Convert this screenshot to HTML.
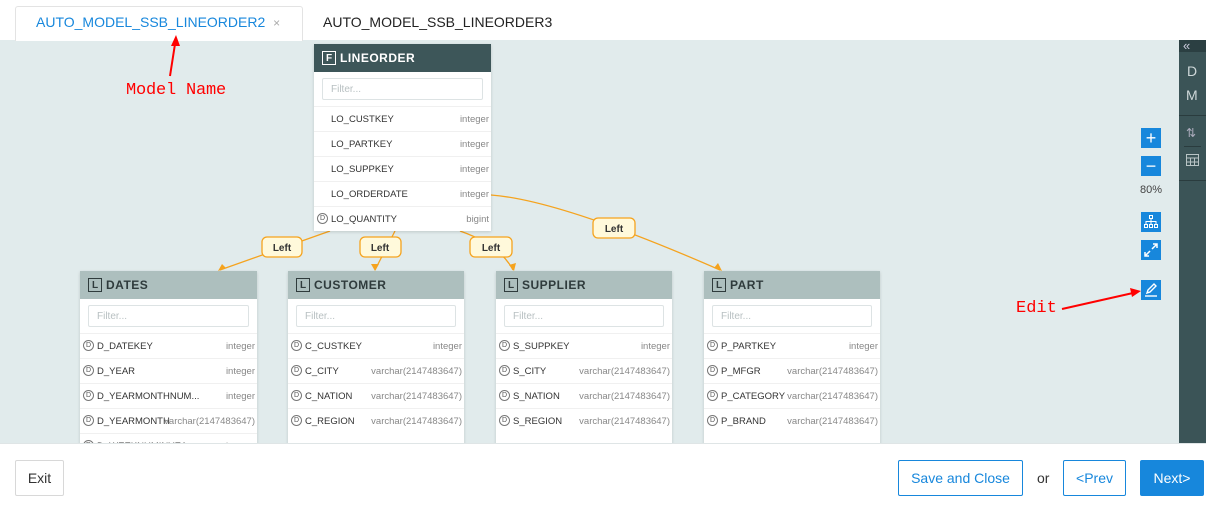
<!DOCTYPE html><html><head><style>
*{box-sizing:border-box;margin:0;padding:0}
body{width:1206px;height:505px;position:relative;overflow:hidden;background:#fff;font-family:"Liberation Sans",sans-serif}
.abs{position:absolute}
.canvas{left:0;top:40px;width:1206px;height:403px;background:#e1ebec}
.tbl{position:absolute;background:#fff;box-shadow:0 1px 3px rgba(0,0,0,.15);overflow:hidden}
.hd{height:28px;color:#fff;font-weight:bold;font-size:12px;display:flex;align-items:center;padding-left:8px;letter-spacing:.5px}
.hd .ic{width:14px;height:14px;border:1.5px solid currentColor;font-size:10px;display:inline-flex;align-items:center;justify-content:center;margin-right:4px;letter-spacing:0}
.dark{background:#3d5659}
.light{background:#adbfbe;color:#2f3b3c}
.flt{margin:6px 8px;height:22px;border:1px solid #dde3e4;border-radius:2px;font-size:10px;color:#b8c0c2;padding:5px 8px}
.row{height:25px;border-top:1px solid #f0f0f0;font-size:9.5px;color:#333;display:flex;align-items:center;position:relative;padding-left:17px}
.row .t{position:absolute;right:2px;color:#888;font-size:9.5px}
.d{position:absolute;left:3px;top:6px;width:11px;height:11px;border:1px solid #777;border-radius:50%;font-size:7px;color:#555;text-align:center;line-height:9px}
.btn{position:absolute;height:36px;border:1px solid #1787dc;border-radius:2px;color:#1787dc;font-size:14px;display:flex;align-items:center;justify-content:center}
.sq{position:absolute;left:1141px;width:20px;height:20px;background:#1787dc;color:#fff;display:flex;align-items:center;justify-content:center}
</style></head><body>
<div class="abs" style="left:15px;top:6px;width:288px;height:35px;border:1px solid #e3e3e3;border-bottom:none;border-radius:3px 3px 0 0;background:#fff;z-index:2"></div>
<div class="abs" style="left:36px;top:14px;font-size:14px;color:#1787dc;z-index:3">AUTO_MODEL_SSB_LINEORDER2 <span style="color:#aaa;font-size:12px;margin-left:4px">×</span></div>
<div class="abs" style="left:323px;top:14px;font-size:14px;color:#222">AUTO_MODEL_SSB_LINEORDER3</div>
<div class="abs canvas"></div>
<svg class="abs" style="left:0;top:0" width="1206" height="505">
<g fill="none" stroke="#f5a31e" stroke-width="1.3">
<path d="M330 231 L220 270"/><path d="M395 231 L375 270"/><path d="M460 231 Q500 245 513 270"/><path d="M491 195 Q560 200 720 270"/>
</g>
<g fill="#f5a31e"><path d="M218 271 l4 -7 l4 4z"/><path d="M375 271 l-4 -7 h8z"/><path d="M514 271 l-5 -6 l7 -2z"/><path d="M722 271 l-8 -3 l4 -5z"/></g>
<g font-family="Liberation Sans" font-size="10" font-weight="bold" fill="#333" text-anchor="middle">
<rect x="262" y="237" width="40" height="20" rx="5" fill="#fff9db" stroke="#f5a31e" stroke-width="1.3"/><text x="282" y="251">Left</text>
<rect x="360" y="237" width="41" height="20" rx="5" fill="#fff9db" stroke="#f5a31e" stroke-width="1.3"/><text x="380" y="251">Left</text>
<rect x="470" y="237" width="42" height="20" rx="5" fill="#fff9db" stroke="#f5a31e" stroke-width="1.3"/><text x="491" y="251">Left</text>
<rect x="593" y="218" width="42" height="20" rx="5" fill="#fff9db" stroke="#f5a31e" stroke-width="1.3"/><text x="614" y="232">Left</text>
</g>
</svg>
<div class="tbl" style="left:314px;top:44px;width:177px;height:187px">
<div class="hd dark"><span class="ic">F</span>LINEORDER</div><div class="flt">Filter...</div>
<div class="row">LO_CUSTKEY<span class="t">integer</span></div>
<div class="row">LO_PARTKEY<span class="t">integer</span></div>
<div class="row">LO_SUPPKEY<span class="t">integer</span></div>
<div class="row">LO_ORDERDATE<span class="t">integer</span></div>
<div class="row"><span class="d">D</span>LO_QUANTITY<span class="t">bigint</span></div>
</div>
<div class="tbl" style="left:80px;top:271px;width:177px;height:180px">
<div class="hd light"><span class="ic">L</span>DATES</div><div class="flt">Filter...</div>
<div class="row"><span class="d">D</span>D_DATEKEY<span class="t">integer</span></div>
<div class="row"><span class="d">D</span>D_YEAR<span class="t">integer</span></div>
<div class="row"><span class="d">D</span>D_YEARMONTHNUM...<span class="t">integer</span></div>
<div class="row"><span class="d">D</span>D_YEARMONTH<span class="t">varchar(2147483647)</span></div>
<div class="row"><span class="d">D</span>D_WEEKNUMINYEA<span class="t">integer</span></div>
</div>
<div class="tbl" style="left:288px;top:271px;width:176px;height:180px">
<div class="hd light"><span class="ic">L</span>CUSTOMER</div><div class="flt">Filter...</div>
<div class="row"><span class="d">D</span>C_CUSTKEY<span class="t">integer</span></div>
<div class="row"><span class="d">D</span>C_CITY<span class="t">varchar(2147483647)</span></div>
<div class="row"><span class="d">D</span>C_NATION<span class="t">varchar(2147483647)</span></div>
<div class="row"><span class="d">D</span>C_REGION<span class="t">varchar(2147483647)</span></div>
</div>
<div class="tbl" style="left:496px;top:271px;width:176px;height:180px">
<div class="hd light"><span class="ic">L</span>SUPPLIER</div><div class="flt">Filter...</div>
<div class="row"><span class="d">D</span>S_SUPPKEY<span class="t">integer</span></div>
<div class="row"><span class="d">D</span>S_CITY<span class="t">varchar(2147483647)</span></div>
<div class="row"><span class="d">D</span>S_NATION<span class="t">varchar(2147483647)</span></div>
<div class="row"><span class="d">D</span>S_REGION<span class="t">varchar(2147483647)</span></div>
</div>
<div class="tbl" style="left:704px;top:271px;width:176px;height:180px">
<div class="hd light"><span class="ic">L</span>PART</div><div class="flt">Filter...</div>
<div class="row"><span class="d">D</span>P_PARTKEY<span class="t">integer</span></div>
<div class="row"><span class="d">D</span>P_MFGR<span class="t">varchar(2147483647)</span></div>
<div class="row"><span class="d">D</span>P_CATEGORY<span class="t">varchar(2147483647)</span></div>
<div class="row"><span class="d">D</span>P_BRAND<span class="t">varchar(2147483647)</span></div>
</div>
<!-- sidebar -->
<div class="abs" style="left:1179px;top:40px;width:27px;height:403px;background:#3b5457"></div>
<div class="abs" style="left:1179px;top:40px;width:27px;height:12px;background:#2b3f42;color:#ccd;font-size:13px;line-height:11px;padding-left:4px">«</div>
<div class="abs" style="left:1187px;top:63px;color:#cfd8d9;font-size:14px">D</div>
<div class="abs" style="left:1186px;top:87px;color:#cfd8d9;font-size:14px">M</div>
<div class="abs" style="left:1179px;top:115px;width:27px;border-top:1px solid #2a3c3e"></div>
<div class="abs" style="left:1186px;top:126px;color:#aab;font-size:12px">⇅</div>
<div class="abs" style="left:1184px;top:146px;width:17px;border-top:1px solid #2a3c3e"></div>
<svg class="abs" style="left:1186px;top:154px" width="13" height="12"><g fill="none" stroke="#b8c4c5"><rect x=".5" y=".5" width="12" height="11"/><path d="M.5 4h12M.5 8h12M4.5 4v7.5M8.5 4v7.5"/></g></svg>
<div class="abs" style="left:1179px;top:180px;width:27px;border-top:1px solid #2a3c3e"></div>
<!-- zoom controls -->
<div class="sq" style="top:128px;font-size:18px">+</div>
<div class="sq" style="top:156px;font-size:18px">−</div>
<div class="abs" style="left:1140px;top:184px;font-size:11px;color:#444">80%</div>
<div class="sq" style="top:212px"><svg width="14" height="14"><g fill="none" stroke="#fff"><rect x="5.5" y=".5" width="3" height="3"/><rect x=".5" y="9.5" width="3" height="3"/><rect x="5.5" y="9.5" width="3" height="3"/><rect x="10.5" y="9.5" width="3" height="3"/><path d="M7 3.5v6M2 9.5V6.5h10v3"/></g></svg></div>
<div class="sq" style="top:240px"><svg width="14" height="14"><g fill="none" stroke="#fff" stroke-width="1.5"><path d="M8 6l5-5M9 1h4v4M6 8l-5 5M1 9v4h4"/></g></svg></div>
<div class="sq" style="top:280px"><svg width="14" height="14"><g fill="none" stroke="#fff" stroke-width="1.4"><path d="M3 10l1-3 6-6 2 2-6 6z"/><path d="M1 13h12"/></g></svg></div>
<!-- annotations -->
<svg class="abs" style="left:0;top:0;z-index:4" width="1206" height="505"><g stroke="#f00" fill="#f00" stroke-width="2"><path d="M170 76L175 44"/><path d="M176 35l-5 11h9z" stroke="none"/><path d="M1062 309L1133 293"/><path d="M1141 291l-11 -3 2 9z" stroke="none"/></g></svg>
<div class="abs" style="left:126px;top:81px;font-family:'Liberation Mono',monospace;font-size:17px;color:#f00;letter-spacing:-.2px">Model Name</div>
<div class="abs" style="left:1016px;top:299px;font-family:'Liberation Mono',monospace;font-size:17px;color:#f00">Edit</div>
<!-- bottom -->
<div class="abs" style="left:0;top:443px;width:1206px;height:62px;background:#fff;border-top:1px solid #dfe5e6"></div>
<div class="btn" style="left:15px;top:460px;width:49px;border-color:#d8d8d8;color:#333">Exit</div>
<div class="btn" style="left:898px;top:460px;width:125px">Save and Close</div>
<div class="abs" style="left:1037px;top:470px;font-size:14px;color:#333">or</div>
<div class="btn" style="left:1063px;top:460px;width:63px">&lt;Prev</div>
<div class="btn" style="left:1140px;top:460px;width:64px;background:#1787dc;color:#fff">Next&gt;</div>
</body></html>
